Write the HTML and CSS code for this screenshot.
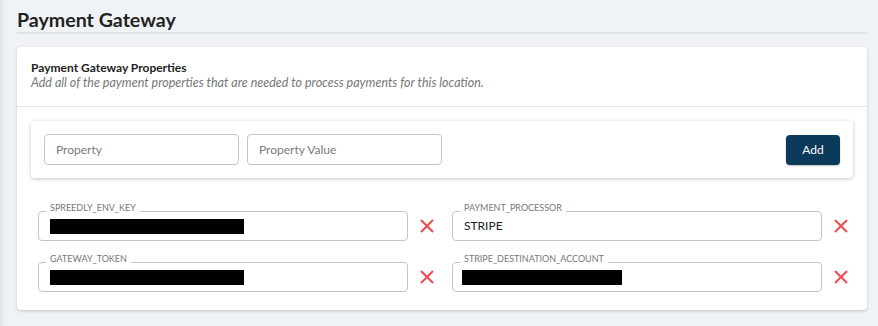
FILE: index.html
```html
<!DOCTYPE html>
<html lang="en">
<head>
<meta charset="utf-8">
<title>Payment Gateway</title>
<link rel="stylesheet" href="styles.css">
</head>
<body>
<main class="page">
  <h1 class="page-title">Payment Gateway</h1>
  <section class="card">
    <header class="card-header">
      <div class="card-title">Payment Gateway Properties</div>
      <div class="card-subtitle">Add all of the payment properties that are needed to process payments for this location.</div>
    </header>
    <div class="card-body">
      <div class="add-row">
        <div class="add-inputs">
          <input class="text-input" type="text" placeholder="Property">
          <input class="text-input" type="text" placeholder="Property Value">
        </div>
        <button class="btn-add" type="button">Add</button>
      </div>
      <div class="props">
        <div class="prop">
          <fieldset class="field">
            <legend class="field-label">SPREEDLY_ENV_KEY</legend>
            <div class="field-value"><span class="redact redact-lg"></span></div>
          </fieldset>
          <button class="remove" type="button" aria-label="Remove"><svg width="14" height="14" viewBox="0 0 14 14"><path d="M1 1L13 13M13 1L1 13" stroke="#f24a4a" stroke-width="2" fill="none"/></svg></button>
        </div>
        <div class="prop">
          <fieldset class="field">
            <legend class="field-label">PAYMENT_PROCESSOR</legend>
            <div class="field-value"><span class="value-text">STRIPE</span></div>
          </fieldset>
          <button class="remove" type="button" aria-label="Remove"><svg width="14" height="14" viewBox="0 0 14 14"><path d="M1 1L13 13M13 1L1 13" stroke="#f24a4a" stroke-width="2" fill="none"/></svg></button>
        </div>
        <div class="prop">
          <fieldset class="field">
            <legend class="field-label">GATEWAY_TOKEN</legend>
            <div class="field-value"><span class="redact redact-lg"></span></div>
          </fieldset>
          <button class="remove" type="button" aria-label="Remove"><svg width="14" height="14" viewBox="0 0 14 14"><path d="M1 1L13 13M13 1L1 13" stroke="#f24a4a" stroke-width="2" fill="none"/></svg></button>
        </div>
        <div class="prop">
          <fieldset class="field">
            <legend class="field-label">STRIPE_DESTINATION_ACCOUNT</legend>
            <div class="field-value"><span class="redact redact-md"></span></div>
          </fieldset>
          <button class="remove" type="button" aria-label="Remove"><svg width="14" height="14" viewBox="0 0 14 14"><path d="M1 1L13 13M13 1L1 13" stroke="#f24a4a" stroke-width="2" fill="none"/></svg></button>
        </div>
      </div>
    </div>
  </section>
</main>
</body>
</html>
```
FILE: styles.css
```css
* { box-sizing: border-box; }

html, body {
  margin: 0;
  height: 100%;
}

body {
  font-family: Lato, "Open Sans", "Liberation Sans", sans-serif;
  color: #222;
  background: linear-gradient(to right, #e1e4e8 0, #eceff2 4px, #f0f3f6 8px);
}

.page {
  width: 850px;
  margin-left: 17px;
}

.page-title {
  margin: 0;
  padding-top: 8px;
  font-size: 19.6px;
  line-height: 24px;
  font-weight: 700;
  color: #222;
  border-bottom: 2px solid #dfe3e8;
}

.card {
  margin-top: 13px;
  background: #fff;
  border-radius: 4px;
  box-shadow: 0 1px 3px rgba(0, 0, 0, 0.2);
}

.card-header {
  padding: 13px 14px 16px;
  border-bottom: 1px solid #e2e2e2;
  font-size: 12px;
  line-height: 15px;
}

.card-title {
  font-weight: 700;
  color: #222;
}

.card-subtitle {
  font-size: 12.5px;
  font-style: italic;
  color: #777;
}

.card-body {
  padding: 14px 14px 18px;
}

.add-row {
  display: flex;
  align-items: center;
  justify-content: space-between;
  padding: 13px;
  background: #fff;
  border-radius: 4px;
  box-shadow: 0 1px 4px rgba(0, 0, 0, 0.22);
}

.add-inputs {
  display: flex;
  gap: 8px;
}

.text-input {
  width: 195px;
  height: 31px;
  padding: 0 11px;
  border: 1px solid #c4c4c4;
  border-radius: 4px;
  font-family: inherit;
  font-size: 12px;
  color: #222;
  background: #fff;
  outline: none;
}

.text-input::placeholder {
  color: #7a7a7a;
}

.btn-add {
  width: 54px;
  height: 30px;
  border: 0;
  border-radius: 4px;
  background: #0c3a5b;
  color: #fff;
  font-family: inherit;
  font-size: 12px;
  box-shadow: 0 1px 2px rgba(0, 0, 0, 0.25);
}

.props {
  display: grid;
  grid-template-columns: 1fr 1fr;
  column-gap: 6px;
  row-gap: 13px;
  margin-top: 25px;
  padding-left: 7px;
  margin-right: -7px;
}

.prop {
  display: flex;
  align-items: flex-end;
}

.field {
  flex: 1;
  min-width: 0;
  margin: 0;
  padding: 0 11px 6px;
  border: 1px solid #c4c4c4;
  border-radius: 4px;
}

.field-label {
  margin-left: -4px;
  padding: 0 4px 7px;
  font-size: 9px;
  line-height: 10px;
  color: #777;
}

.field-value {
  display: flex;
  align-items: center;
  height: 15px;
  margin-top: -1px;
}

.value-text {
  font-size: 12px;
  color: #222;
  margin-bottom: 2px;
}

.redact {
  display: block;
  height: 15px;
  background: #000;
}

.redact-lg { width: 194px; }
.redact-md { width: 160px; margin-left: -2px; }

.remove {
  display: flex;
  align-items: center;
  justify-content: center;
  width: 38px;
  height: 31px;
  padding: 0;
  border: 0;
  background: none;
}
```
